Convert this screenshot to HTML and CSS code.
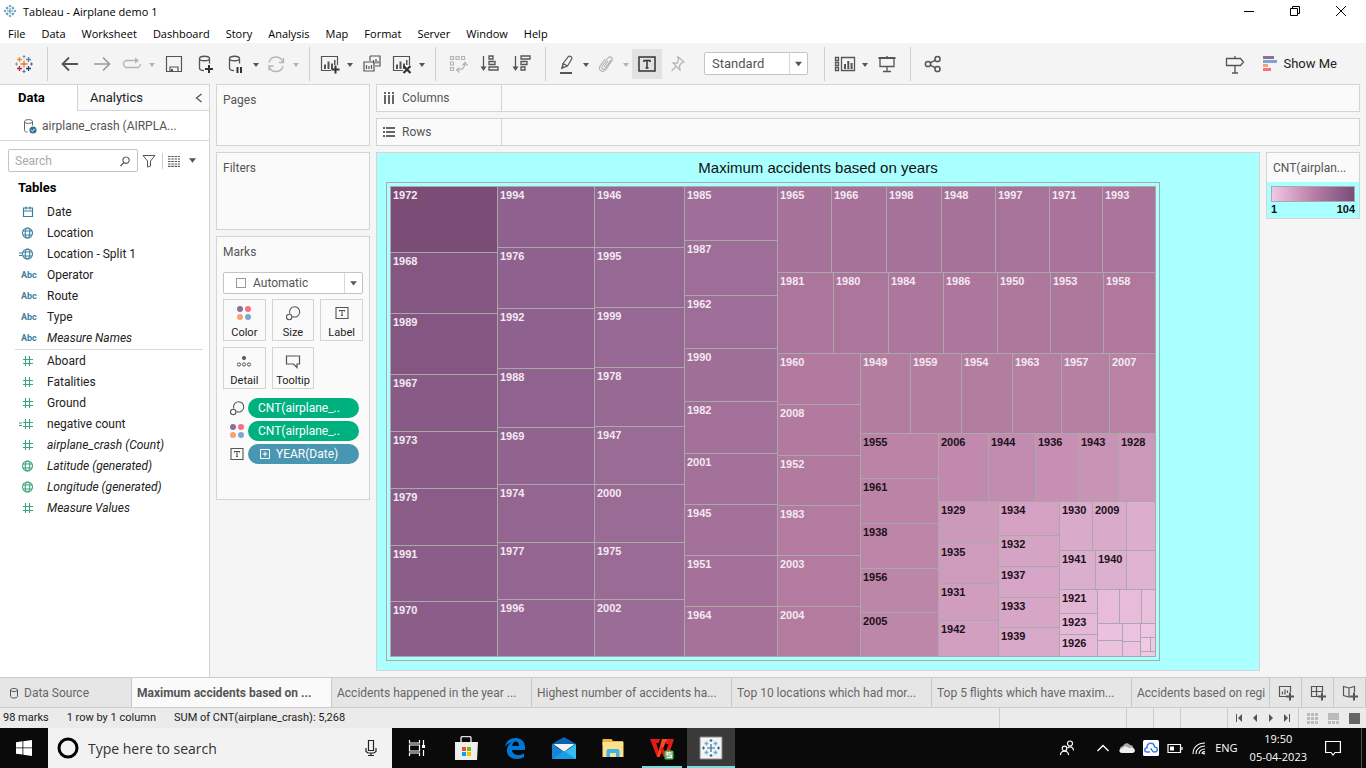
FILE: index.html
```html
<!DOCTYPE html>
<html lang="en">
<head>
<meta charset="utf-8">
<title>Tableau - Airplane demo 1</title>
<link rel="stylesheet" href="styles.css">
</head>
<body>
<svg class="sprite" aria-hidden="true">
  <symbol id="tableau" viewBox="0 0 24 24"><g fill="none" stroke-width="1.300"><path stroke="#e8762d" d="M12 8.500v7M8.500 12h7"/><path stroke="#eb912c" d="M7.500 5v5M5 7.500h5"/><path stroke="#59879b" d="M16.500 5v5M14 7.500h5"/><path stroke="#c72035" d="M7.500 14v5M5 16.500h5"/><path stroke="#1f447e" d="M16.500 14v5M14 16.500h5"/><path stroke="#7199a6" stroke-width="1" d="M12 3v3.500M10.500 4.500h3M4.500 10.500v3M3 12h3"/><path stroke="#5b6591" stroke-width="1" d="M12 17.500V21M10.500 19.500h3M19.500 10.500v3M18 12h3"/></g></symbol>
  <symbol id="tableau-blue" viewBox="0 0 24 24"><g fill="none" stroke="#2e7ba6" stroke-width="1.400"><path d="M12 7v10M7 12h10M7 4.500v5M4.500 7h5M17 4.500v5M14.500 7h5M7 14.500v5M4.500 17h5M17 14.500v5M14.500 17h5M12 1.500v4M10 3.500h4M12 18.500v4M10 20.500h4M3.500 10v4M1.500 12h4M20.500 10v4M18.500 12h4"/></g></symbol>
  <symbol id="caret" viewBox="0 0 8 24"><path fill="currentColor" d="M1 11h6l-3 4z"/></symbol>
  <symbol id="caret-large" viewBox="0 0 8 24"><path fill="currentColor" d="M0 10h8l-4 5z"/></symbol>
  <symbol id="back" viewBox="0 0 24 24"><path fill="none" stroke="currentColor" stroke-width="1.800" d="M20 12H5M11 5.500L4.500 12l6.500 6.500"/></symbol>
  <symbol id="forward" viewBox="0 0 24 24"><path fill="none" stroke="currentColor" stroke-width="1.600" d="M4 12h15M13 5.500l6.500 6.500-6.500 6.500"/></symbol>
  <symbol id="replay" viewBox="0 0 24 24"><path fill="none" stroke="currentColor" stroke-width="1.300" d="M14 8.500H7a3.500 3.500 0 0 0 0 7h10a3.500 3.500 0 0 0 3.500-3.500M14 8.500h4"/><path fill="currentColor" d="M15 5.500l4 3-4 3z"/></symbol>
  <symbol id="save" viewBox="0 0 24 24"><path fill="none" stroke="currentColor" stroke-width="1.200" d="M4.500 4.500h15v15h-15zM8 19v-4h8v4"/><path fill="currentColor" d="M9 17h2v3H9z"/></symbol>
  <symbol id="db" viewBox="0 0 24 24"><path fill="none" stroke="currentColor" stroke-width="1.300" d="M5.500 6.500v9.500c0 1.500 2 2.500 4.500 2.500M15.500 6.500v5M5.500 6.500c0-3 10-3 10 0s-10 3-10 0"/></symbol>
  <symbol id="db-add" viewBox="0 0 24 24"><use href="#db"/><path stroke="#333" stroke-width="2" d="M15 13v8M11 17h8"/></symbol>
  <symbol id="db-pause" viewBox="0 0 24 24"><use href="#db"/><path stroke="#333" stroke-width="2" d="M13.500 15v6M17 15v6"/></symbol>
  <symbol id="refresh" viewBox="0 0 24 24"><path fill="none" stroke="currentColor" stroke-width="1.300" d="M5 10.500a7.200 7.200 0 0 1 14 0M19 14a7.200 7.200 0 0 1-14 0M5 18.500V14h4.500M15 10.500h4.500V6"/></symbol>
  <symbol id="chart" viewBox="0 0 24 24"><path fill="none" stroke="currentColor" stroke-width="1.200" d="M19.500 13V4.500h-16v14H13"/><path fill="currentColor" d="M6 12.500h2V17H6zM9.500 9.500h2V17h-2zM13 11.500h2V17h-2zM16 8h1.500v5H16z"/></symbol>
  <symbol id="chart-add" viewBox="0 0 24 24"><use href="#chart"/><path stroke="#333" stroke-width="2" d="M17.500 13.500v8M13.500 17.500h8"/></symbol>
  <symbol id="chart-clear" viewBox="0 0 24 24"><use href="#chart"/><path stroke="#333" stroke-width="2.200" d="M13.500 14l7 7M20.500 14l-7 7"/></symbol>
  <symbol id="chart-copy" viewBox="0 0 24 24"><path fill="none" stroke="currentColor" stroke-width="1.200" d="M10 4h10v10H15M10 9V4M4 10h10v9H4zM13.500 11.500V8M16 11.500V7M18 11.500V9M6.500 17v-4M9 17v-3M11.500 17v-4"/></symbol>
  <symbol id="swap" viewBox="0 0 24 24"><path fill="none" stroke="currentColor" stroke-width="1.200" d="M4.500 4.500h3v3h-3zM10 4.500h3v3h-3zM15.500 4.500h3v3h-3zM4.500 10h3v3h-3zM4.500 15.500h3v3h-3zM19 11c0 5-3 7-8 7M16.500 13.500l2.500-3 2.500 3M13.500 15.500l-3 2.500 3 2.500"/></symbol>
  <symbol id="sort-up" viewBox="0 0 24 24"><path fill="none" stroke="currentColor" stroke-width="1.300" d="M5.500 4v13M11 4h4v3h-4zM11 9.500h6v3h-6zM11 15h9v3h-9z"/><path fill="currentColor" d="M2.500 14.500h6L5.500 19z"/></symbol>
  <symbol id="sort-down" viewBox="0 0 24 24"><path fill="none" stroke="currentColor" stroke-width="1.300" d="M5.500 4v13M11 4h9v3h-9zM11 9.500h6v3h-6zM11 15h4v3h-4z"/><path fill="currentColor" d="M2.500 14.500h6L5.500 19z"/></symbol>
  <symbol id="pen" viewBox="0 0 24 24"><path fill="none" stroke="currentColor" stroke-width="1.200" d="M9 11.500l5.500-7c1.200-1.200 4 .3 3.300 2.300L13.500 14zM9 11.500l-1 4.500 5.500-2"/><path fill="currentColor" d="M8.300 13.500l2.500 1.700L7 17.500z"/><path stroke="currentColor" stroke-width="2" d="M6 21h12"/></symbol>
  <symbol id="clip" viewBox="0 0 24 24"><path fill="none" stroke="currentColor" stroke-width="1.200" d="M17 8l-6 8.500c-1.500 2-4.500 0-3-2L14 6c2-2.500 5.500 0 3.800 2.600L12 17.500c-3 4-8.500.5-6-3.500L11 7M14 9l-4 6"/></symbol>
  <symbol id="text" viewBox="0 0 24 24"><path fill="none" stroke="currentColor" stroke-width="1.500" d="M4 5h16v14H4zM9 10V8.500h6V10M12 8.500V16M10.500 16h3"/></symbol>
  <symbol id="pin" viewBox="0 0 24 24"><path fill="none" stroke="currentColor" stroke-width="1.200" d="M11.500 4.500l6.500 5.500-2 .5-2.500 3 .5 4.500-7-7 4.500.2L12.500 7zM10 14.500L5.500 19"/></symbol>
  <symbol id="cards" viewBox="0 0 24 24"><path fill="none" stroke="currentColor" stroke-width="1.300" d="M2.500 5.500h3v3h-3zM2.500 10.500h3v3h-3zM2.500 15.500h3v3h-3zM8.500 5.500h13v13h-13z"/><path fill="currentColor" d="M11 12h2v5h-2zM14.300 9h2v8h-2zM17.600 11h2v6h-2z"/></symbol>
  <symbol id="present" viewBox="0 0 24 24"><path fill="none" stroke="currentColor" stroke-width="1.300" d="M5 6v8.500h14V6M12 4v2M12 14.500V19M8 19.500h8"/><path stroke="currentColor" stroke-width="2" d="M3.500 6h17"/></symbol>
  <symbol id="share" viewBox="0 0 24 24"><g fill="none" stroke="currentColor" stroke-width="1.500"><circle cx="7" cy="12" r="2.600"/><circle cx="16.500" cy="7" r="2.600"/><circle cx="16.500" cy="17" r="2.600"/><path d="M9.300 10.800l5-2.600M9.300 13.200l5 2.600"/></g></symbol>
  <symbol id="guide" viewBox="0 0 24 24"><path fill="none" stroke="currentColor" stroke-width="1.300" d="M3.500 6.500h14l3 3.500-3 3.500h-14zM12 4v2.500M12 13.500V21M9 21h6"/></symbol>
  <symbol id="showme" viewBox="0 0 14 16"><path fill="#8a7199" d="M0 0h11v3H0z"/><path fill="#80a5cd" d="M0 4h14v3H0z"/><path fill="#f5a374" d="M0 8h5v3H0z"/><path fill="#f8727d" d="M0 12h8v3H0z"/></symbol>
  <symbol id="source" viewBox="0 0 16 16"><path fill="none" stroke="#666" d="M2.500 3.500v9c0 1 1 1.500 3 1.500M10.500 3.500v4M2.500 3.500c0-2.500 8-2.500 8 0s-8 2.500-8 0"/><circle cx="11" cy="12" r="3.600" fill="#2f7694"/><path fill="none" stroke="#fff" d="M9.200 12l1.300 1.300 2.300-2.600"/></symbol>
  <symbol id="search" viewBox="0 0 12 12"><path fill="none" stroke="#555" stroke-width="1.100" d="M5 7.500L1.500 11M7 2a3.200 3.200 0 1 0 .1 0"/></symbol>
  <symbol id="funnel" viewBox="0 0 14 14"><path fill="none" stroke="#555" d="M1 1.500h12L8.500 7v5l-3 1V7z"/></symbol>
  <symbol id="list" viewBox="0 0 14 12"><path stroke="#555" stroke-width="1.200" stroke-dasharray="2.500 .8" d="M1 1.500h12M1 4h12M1 6.500h12M1 9h12M1 11.300h12"/></symbol>
  <symbol id="date" viewBox="0 0 16 14"><path fill="none" stroke="currentColor" stroke-width="1.200" d="M4.500 3h9v8.500h-9zM4.500 6h9M7 1.500v3M11 1.500v3"/></symbol>
  <symbol id="globe" viewBox="0 0 16 14"><g fill="none" stroke="currentColor" stroke-width="1.100"><circle cx="8.500" cy="7" r="5"/><ellipse cx="8.500" cy="7" rx="2.300" ry="5"/><path d="M4 5h9M4 9h9"/></g></symbol>
  <symbol id="globe-calc" viewBox="0 0 16 14"><use href="#globe"/><path stroke="currentColor" d="M0 6h3M0 8.500h3"/></symbol>
  <symbol id="hash" viewBox="0 0 16 14"><path stroke="currentColor" stroke-width="1.100" d="M6.500 2v10M10.500 2v10M4 5.500h10M4 9.500h10"/></symbol>
  <symbol id="hash-calc" viewBox="0 0 16 14"><use href="#hash"/><path stroke="currentColor" d="M0 6h3M0 8.500h3"/></symbol>
  <symbol id="colors" viewBox="0 0 16 16"><circle cx="4" cy="4" r="3" fill="#8a7199"/><circle cx="12" cy="4" r="3" fill="#f8727d"/><circle cx="4" cy="12" r="3" fill="#f5a374"/><circle cx="12" cy="12" r="3" fill="#80a5cd"/></symbol>
  <symbol id="size" viewBox="0 0 16 16"><g fill="none" stroke="#555" stroke-width="1.100"><path d="M4.800 8.500a5.100 5.100 0 1 1 2.700 3"/><circle cx="4.200" cy="12" r="2.700"/></g></symbol>
  <symbol id="label" viewBox="0 0 16 16"><path fill="none" stroke="#555" stroke-width="1.100" d="M2 2.500h12v11H2zM5.500 6.500v-1h5v1M8 5.500v5M7 10.500h2"/></symbol>
  <symbol id="detail" viewBox="0 0 16 16"><circle cx="8" cy="5" r="2" fill="#555"/><g fill="none" stroke="#555"><circle cx="3" cy="11.500" r="1.600"/><circle cx="8" cy="11.500" r="1.600"/><circle cx="13" cy="11.500" r="1.600"/></g></symbol>
  <symbol id="tooltip" viewBox="0 0 16 16"><path fill="none" stroke="#555" stroke-width="1.200" d="M1.500 3h13v8H12v3.500L8.500 11h-7z"/></symbol>
  <symbol id="plusbox" viewBox="0 0 10 10"><path fill="none" stroke="#fff" d="M.5.500h9v9h-9zM5 2.500v5M2.500 5h5"/></symbol>
  <symbol id="columns" viewBox="0 0 12 12"><path fill="#666" d="M1 0h2v2H1zM5 0h2v2H5zM9 0h2v2H9zM1 3h2v9H1zM5 3h2v9H5zM9 3h2v9H9z"/></symbol>
  <symbol id="rows" viewBox="0 0 12 12"><path fill="#666" d="M0 1h2v2H0zM0 5h2v2H0zM0 9h2v2H0zM3 1h9v2H3zM3 5h9v2H3zM3 9h9v2H3z"/></symbol>
  <symbol id="cylinder" viewBox="0 0 10 12"><path fill="none" stroke="#555" d="M1.500 3v6.500c0 2 7 2 7 0V3c0-2-7-2-7 0s7 2 7 0"/></symbol>
  <symbol id="new-sheet" viewBox="0 0 18 16"><path fill="none" stroke="#555" stroke-width="1.200" d="M13.500 7V1.500h-11v10H9M5.500 9.500v-3M8 9.500v-5M10.500 8V5.500"/><path stroke="#555" stroke-width="2" d="M13 7.500v8M9 11.500h8"/></symbol>
  <symbol id="new-dash" viewBox="0 0 18 16"><path fill="none" stroke="#555" stroke-width="1.200" d="M13.500 7V1.500h-11v10H9M2.500 6.500h11M7.500 1.500v10"/><path stroke="#555" stroke-width="2" d="M13 7.500v8M9 11.500h8"/></symbol>
  <symbol id="new-story" viewBox="0 0 18 16"><path fill="none" stroke="#555" stroke-width="1.200" d="M13.500 7V1.500L8 3 2.500 1.500v9L8 12V3"/><path stroke="#555" stroke-width="2" d="M13 7.500v8M9 11.500h8"/></symbol>
  <symbol id="nav-first" viewBox="0 0 8 8"><path fill="#555" d="M1 0h1v8H1zM7 0v8L3 4z"/></symbol>
  <symbol id="nav-prev" viewBox="0 0 8 8"><path fill="#555" d="M6 0v8L2 4z"/></symbol>
  <symbol id="nav-next" viewBox="0 0 8 8"><path fill="#555" d="M2 0v8l4-4z"/></symbol>
  <symbol id="nav-last" viewBox="0 0 8 8"><path fill="#555" d="M6 0h1v8H6zM1 0v8l4-4z"/></symbol>
  <symbol id="view-grid" viewBox="0 0 11 11"><path fill="#bbb" d="M0 0h3v3H0zM4 0h3v3H4zM8 0h3v3H8zM0 4h3v3H0zM4 4h3v3H4zM8 4h3v3H8zM0 8h3v3H0zM4 8h3v3H4zM8 8h3v3H8z"/></symbol>
  <symbol id="view-film" viewBox="0 0 11 11"><path fill="#bbb" d="M0 0h11v7H0zM0 8h3v3H0zM4 8h3v3H4zM8 8h3v3H8z"/></symbol>
  <symbol id="view-one" viewBox="0 0 11 11"><path fill="#666" d="M0 0h11v11H0z"/></symbol>
</svg>

<div class="app">
  <header class="titlebar">
    <svg class="app-icon"><use href="#tableau-blue"/></svg>
    <h1>Tableau - Airplane demo 1</h1>
    <div class="window-buttons">
      <button aria-label="Minimize"><svg viewBox="0 0 12 12"><path stroke="#000" d="M1 6.500h10"/></svg></button>
      <button aria-label="Restore"><svg viewBox="0 0 12 12"><path fill="none" stroke="#000" d="M1.500 3.500h7v7h-7zM3.500 3.500v-2h7v7h-2"/></svg></button>
      <button aria-label="Close"><svg viewBox="0 0 12 12"><path stroke="#000" d="M1 1l10 10M11 1L1 11"/></svg></button>
    </div>
  </header>
  <nav class="menubar">
    <button>File</button><button>Data</button><button>Worksheet</button><button>Dashboard</button><button>Story</button><button>Analysis</button><button>Map</button><button>Format</button><button>Server</button><button>Window</button><button>Help</button>
  </nav>

  <div class="toolbar">
    <div class="group first"><button class="tool" aria-label="Start page"><svg><use href="#tableau"/></svg></button></div>
    <div class="group">
      <button class="tool" aria-label="Undo"><svg><use href="#back"/></svg></button>
      <button class="tool soft" aria-label="Redo"><svg><use href="#forward"/></svg></button>
      <button class="tool split off" aria-label="Replay"><svg><use href="#replay"/></svg><svg class="caret"><use href="#caret"/></svg></button>
      <button class="tool" aria-label="Save"><svg><use href="#save"/></svg></button>
      <button class="tool" aria-label="New data source"><svg><use href="#db-add"/></svg></button>
      <button class="tool split" aria-label="Pause updates"><svg><use href="#db-pause"/></svg><svg class="caret"><use href="#caret"/></svg></button>
      <button class="tool split off" aria-label="Run update"><svg><use href="#refresh"/></svg><svg class="caret"><use href="#caret"/></svg></button>
    </div>
    <div class="group">
      <button class="tool split" aria-label="New worksheet"><svg><use href="#chart-add"/></svg><svg class="caret"><use href="#caret"/></svg></button>
      <button class="tool" aria-label="Duplicate"><svg><use href="#chart-copy"/></svg></button>
      <button class="tool split" aria-label="Clear sheet"><svg><use href="#chart-clear"/></svg><svg class="caret"><use href="#caret"/></svg></button>
    </div>
    <div class="group">
      <button class="tool off" aria-label="Swap"><svg><use href="#swap"/></svg></button>
      <button class="tool" aria-label="Sort ascending"><svg><use href="#sort-up"/></svg></button>
      <button class="tool" aria-label="Sort descending"><svg><use href="#sort-down"/></svg></button>
    </div>
    <div class="group wide">
      <button class="tool split" aria-label="Highlight"><svg><use href="#pen"/></svg><svg class="caret"><use href="#caret"/></svg></button>
      <button class="tool split off" aria-label="Group members"><svg><use href="#clip"/></svg><svg class="caret"><use href="#caret"/></svg></button>
      <button class="tool pressed" aria-label="Show mark labels"><svg><use href="#text"/></svg></button>
      <button class="tool off" aria-label="Fix axes"><svg><use href="#pin"/></svg></button>
      <div class="select fit"><select aria-label="Fit"><option>Standard</option><option>Fit Width</option><option>Entire View</option></select><svg class="caret"><use href="#caret-large"/></svg></div>
    </div>
    <div class="group">
      <button class="tool split" aria-label="Show cards"><svg><use href="#cards"/></svg><svg class="caret"><use href="#caret"/></svg></button>
      <button class="tool" aria-label="Presentation mode"><svg><use href="#present"/></svg></button>
    </div>
    <div class="group last"><button class="tool" aria-label="Share"><svg><use href="#share"/></svg></button></div>
    <button class="tool" aria-label="Guide"><svg><use href="#guide"/></svg></button>
    <button class="showme"><svg><use href="#showme"/></svg>Show Me</button>
  </div>

  <div class="workspace">
    <aside class="data-pane">
      <div class="pane-tabs"><button class="active">Data</button><button class="analytics">Analytics<svg viewBox="0 0 8 12"><path fill="none" stroke="#555" stroke-width="1.300" d="M6.500 2l-5 4 5 4"/></svg></button></div>
      <button class="datasource"><svg><use href="#source"/></svg>airplane_crash (AIRPLA...</button>
      <div class="search-row">
        <label class="search"><input type="text" placeholder="Search" aria-label="Search fields"><svg><use href="#search"/></svg></label>
        <button class="filter" aria-label="Filter fields"><svg><use href="#funnel"/></svg></button>
        <button class="view" aria-label="View options"><svg><use href="#list"/></svg><svg viewBox="0 0 8 5"><path fill="#555" d="M0 0h8L4 5z"/></svg></button>
      </div>
      <h2>Tables</h2>
      <ul class="fields dims">
        <li><svg><use href="#date"/></svg>Date</li>
        <li><svg><use href="#globe"/></svg>Location</li>
        <li><svg><use href="#globe-calc"/></svg>Location - Split 1</li>
        <li><b>Abc</b>Operator</li>
        <li><b>Abc</b>Route</li>
        <li><b>Abc</b>Type</li>
        <li><b>Abc</b><i>Measure Names</i></li>
      </ul>
      <ul class="fields measures">
        <li><svg><use href="#hash"/></svg>Aboard</li>
        <li><svg><use href="#hash"/></svg>Fatalities</li>
        <li><svg><use href="#hash"/></svg>Ground</li>
        <li><svg><use href="#hash-calc"/></svg>negative count</li>
        <li><svg><use href="#hash"/></svg><i>airplane_crash (Count)</i></li>
        <li><svg><use href="#globe"/></svg><i>Latitude (generated)</i></li>
        <li><svg><use href="#globe"/></svg><i>Longitude (generated)</i></li>
        <li><svg><use href="#hash"/></svg><i>Measure Values</i></li>
      </ul>
    </aside>

    <div class="cards">
      <section class="card pages"><h3>Pages</h3></section>
      <section class="card filters"><h3>Filters</h3></section>
      <section class="card marks">
        <h3>Marks</h3>
        <div class="select mark-type"><span class="square"></span><select aria-label="Mark type"><option>Automatic</option><option>Square</option><option>Bar</option></select><svg class="caret"><use href="#caret-large"/></svg></div>
        <div class="mark-buttons">
          <button><svg><use href="#colors"/></svg>Color</button>
          <button><svg><use href="#size"/></svg>Size</button>
          <button><svg><use href="#label"/></svg>Label</button>
          <button><svg><use href="#detail"/></svg>Detail</button>
          <button><svg><use href="#tooltip"/></svg>Tooltip</button>
        </div>
        <ul class="pills">
          <li><svg><use href="#size"/></svg><button class="pill">CNT(airplane_..</button></li>
          <li><svg><use href="#colors"/></svg><button class="pill">CNT(airplane_..</button></li>
          <li><svg><use href="#label"/></svg><button class="pill blue"><svg><use href="#plusbox"/></svg>YEAR(Date)</button></li>
        </ul>
      </section>
    </div>

    <main class="sheet">
      <div class="shelf"><span><svg><use href="#columns"/></svg>Columns</span></div>
      <div class="shelf"><span><svg><use href="#rows"/></svg>Rows</span></div>
      <div class="view-row">
        <section class="view-area">
          <h2>Maximum accidents based on years</h2>
          <div class="frame"><div class="treemap row" id="treemap"></div></div>
        </section>
        <section class="legend">
          <h3>CNT(airplan...</h3>
          <div class="ramp"><div class="bar"></div><p><span>1</span><span>104</span></p></div>
        </section>
      </div>
    </main>
  </div>

  <div class="sheet-tabs">
    <button class="source-tab"><svg><use href="#cylinder"/></svg>Data Source</button>
    <div class="tab-strip">
      <button class="active">Maximum accidents based on ...</button>
      <button>Accidents happened in the year ...</button>
      <button>Highest number of accidents ha...</button>
      <button>Top 10 locations which had mor...</button>
      <button>Top 5 flights which have maxim...</button>
      <button class="partial">Accidents based on regi</button>
    </div>
    <button class="new" aria-label="New worksheet"><svg><use href="#new-sheet"/></svg></button>
    <button class="new" aria-label="New dashboard"><svg><use href="#new-dash"/></svg></button>
    <button class="new" aria-label="New story"><svg><use href="#new-story"/></svg></button>
  </div>

  <div class="status">
    <span>98 marks</span><span>1 row by 1 column</span><span>SUM of CNT(airplane_crash): 5,268</span>
    <div class="slot large"></div><div class="slot"></div><div class="slot"></div><div class="slot medium"></div>
    <div class="nav"><button aria-label="First"><svg><use href="#nav-first"/></svg></button><button aria-label="Previous"><svg><use href="#nav-prev"/></svg></button><button aria-label="Next"><svg><use href="#nav-next"/></svg></button><button aria-label="Last"><svg><use href="#nav-last"/></svg></button></div>
    <div class="views"><button aria-label="Sheet sorter"><svg><use href="#view-grid"/></svg></button><button aria-label="Filmstrip"><svg><use href="#view-film"/></svg></button><button aria-label="Tabs"><svg><use href="#view-one"/></svg></button></div>
  </div>

  <footer class="taskbar">
    <button class="start" aria-label="Start"><svg viewBox="0 0 16 16"><path fill="#fff" d="M0 2.200L6.500 1.300v6.200H0zM7.300 1.200L16 0v7.500H7.300zM0 8.300h6.500v6.200L0 13.700zM7.300 8.300H16V16l-8.700-1.200z"/></svg></button>
    <label class="task-search">
      <svg viewBox="0 0 22 22"><circle cx="11" cy="11" r="9" fill="none" stroke="#000" stroke-width="3"/></svg>
      <input type="text" placeholder="Type here to search" aria-label="Type here to search">
      <svg class="mic" viewBox="0 0 12 18"><path fill="none" stroke="#222" stroke-width="1.200" d="M3.500 1.500h5v10h-5zM1 9v3.500L3 14h6l2-1.500V9M6 14v3M3 16.500h6"/></svg>
    </label>
    <button class="task" aria-label="Task view"><svg viewBox="0 0 24 24"><path fill="none" stroke="#fff" stroke-width="1.200" d="M4.500 4v3h10V4M4.500 20v-3h10v3M4.500 9h10v6h-10zM18.500 4v5M18.500 14v6"/><path fill="#fff" d="M17 9h3v3h-3z"/></svg></button>
    <button class="task" aria-label="Store"><svg viewBox="0 0 24 24"><path fill="none" stroke="#ddd" stroke-width="1.400" d="M7 7V2q0-1.500 1.500-1.500h7Q17 .500 17 2v5"/><path fill="#eee" d="M1 6h23l-1 18H1z"/><path fill="#f25022" d="M8 11h4v4H8z"/><path fill="#7fba00" d="M13 11h4v4h-4z"/><path fill="#00a4ef" d="M8 16h4v4H8z"/><path fill="#ffb900" d="M13 16h4v4h-4z"/></svg></button>
    <button class="task" aria-label="Edge"><svg viewBox="0 0 24 24"><path fill="#0078d7" d="M2 11C3 5 7 2 12.500 2 18.500 2 22 6 22 11.500V14H9c.3 3.500 3 5 6.500 5 2.300 0 4-.6 5.500-1.500V21c-2 1.300-4 2-7 2-7 0-10.500-4-10-9.500C4.300 10 6 8 9 6.500 5.500 7 3.500 8.500 2 11zm7.200-1H16c0-3-1.200-4.500-3.200-4.500S9.500 7 9.200 10z"/></svg></button>
    <button class="task" aria-label="Mail"><svg viewBox="0 0 24 24"><path fill="#0a64b4" d="M0 8l12-7 12 7v3H0z"/><path fill="#f4f4f4" d="M1.500 8h21L12 16z"/><path fill="#1784d8" d="M0 8l12 8-12 7z"/><path fill="#35bdf4" d="M24 8v15H0l12-7z"/><path fill="#1a9be5" d="M12 15l12 8H0z"/></svg></button>
    <button class="task" aria-label="File Explorer"><svg viewBox="0 0 24 24"><path fill="#e9b93e" d="M1.500 3h9l1.500 2h10v4h-20.500z"/><path fill="#fde08c" d="M1.500 6h21v15h-21z"/><path fill="#3fb3e6" d="M5.500 21v-6q0-2 2-2h9q2 0 2 2v6H15v-4H9v4z"/></svg></button>
    <button class="task running" aria-label="WPS Office"><svg viewBox="0 0 24 24"><path fill="#e61b16" d="M0 3h5l4 13-2 5zM15 3h9l-6 18h-4l4.500-13H16z"/><path fill="#ff4a20" d="M12 3h5L9.500 21H7z"/><path fill="#e61b16" d="M4 3h6l-1.500 4H5zM12 10l4 8-2 3-4-7z"/><rect x="14.500" y="14.500" width="9" height="9" rx="1.500" fill="#5cb85c"/><path fill="none" stroke="#fff" stroke-width="1.200" d="M21.500 16.800h-4.500v2.200h4.500v2.300H17"/></svg></button>
    <button class="task current" aria-label="Tableau"><svg viewBox="0 0 24 24"><path fill="#f4f4f4" stroke="#888" d="M1 1h22v22H1z"/><path stroke="#2672a0" stroke-width="1.200" d="M12 8v8M8 12h8M12 3v3M10.500 4.500h3M12 18v3M10.500 19.500h3M4.500 10.500v3M3 12h3M19.500 10.500v3M18 12h3"/><path stroke="#6fb0d0" stroke-width="1.500" d="M7.500 5.500v4M5.500 7.500h4M16.500 5.500v4M14.500 7.500h4M7.500 14.500v4M5.500 16.500h4M16.500 14.500v4M14.500 16.500h4"/></svg></button>
    <div class="tray">
      <button class="people" aria-label="People"><svg viewBox="0 0 16 16"><g fill="none" stroke="#fff" stroke-width="1.200"><circle cx="5.500" cy="8.500" r="2.300"/><circle cx="11" cy="3.500" r="2.500"/><path d="M1.500 15c0-5 8-5 8 0M8.500 8c2.500-2 6-1 6 2.500"/></g></svg></button>
      <button aria-label="Show hidden icons"><svg viewBox="0 0 16 16"><path fill="none" stroke="#fff" stroke-width="1.400" d="M2.500 11L8 5.500l5.500 5.500"/></svg></button>
      <button aria-label="OneDrive"><svg viewBox="0 0 16 16"><path fill="#aaa" d="M1 9c0-2 1.500-3 3-3C5 3 9 2 11 5c2 0 3 1 3.500 2.500L8 9z"/><path fill="#eee" d="M3 13c-4 0-3-5 0-4.500C5 5.500 8 6 10 8c4-2 7 1.500 5.500 4L14 13z"/></svg></button>
      <button aria-label="Cloud sync"><svg viewBox="0 0 16 16"><rect width="16" height="16" rx="1.500" fill="#fff"/><path fill="none" stroke="#3b7ef0" stroke-width="1.500" d="M7 12H4c-3 0-3-4 0-4.300C4 2 11 2 11.500 7c4 0 3.500 5 0 5-3 0-2-2.500-4-3.500"/></svg></button>
      <button aria-label="Battery"><svg viewBox="0 0 16 16"><path fill="none" stroke="#fff" stroke-width="1.200" d="M1 4.500h12.500v8H1zM15 7v3"/><path fill="#fff" d="M3 6.500h4v4H3z"/></svg></button>
      <button aria-label="Network"><svg viewBox="0 0 16 16"><g fill="none" stroke="#fff" stroke-width="1.100"><path d="M2 14C2 7 7 3 14 3M5 14c0-5 4-8 9-8M8 14c0-3 2.500-5 6-5M11 14c0-1.500 1-2.500 3-2.500"/></g><circle cx="13" cy="13.500" r="1" fill="#fff"/></svg></button>
      <span class="lang">ENG</span>
      <time>19:50<br>05-04-2023</time>
      <button class="notify" aria-label="Notifications"><svg viewBox="0 0 16 16"><path fill="none" stroke="#fff" stroke-width="1.200" d="M.6 1.500h14.800v11H10L8 15l-2-2.500H.6z"/></svg></button>
    </div>
  </footer>
</div>
<script src="treemap.js"></script>
</body>
</html>
```
FILE: styles.css
```css
* { box-sizing: border-box; }
body { margin: 0; font: 12px/16px "Open Sans", "Noto Sans", sans-serif; color: #222; }
h1, h2, h3, p, ul { margin: 0; padding: 0; font-weight: 400; font-size: inherit; }
ul { list-style: none; }
button, input, select { font: inherit; color: inherit; border: 0; padding: 0; margin: 0; background: none; border-radius: 0; outline: 0; }
svg { display: block; flex: none; }
.sprite { width: 0; height: 0; position: absolute; }

.app { display: flex; flex-direction: column; height: 100vh; background: #f5f5f5; }

.titlebar { display: flex; align-items: center; height: 22px; flex: none; background: #fff; padding: 0 2px 0 3px; color: #000; gap: 6px; font-size: 11px; }
.app-icon { width: 14px; height: 14px; }
.titlebar h1 { flex: 1; padding-top: 2px; }
.window-buttons { display: flex; }
.window-buttons button { width: 46px; height: 22px; display: grid; place-items: center; }
.window-buttons svg { width: 12px; height: 12px; }
.menubar { display: flex; height: 21px; flex: none; background: #fff; color: #000; padding: 2px 8px 0; gap: 16px; font-size: 11px; }

.toolbar { display: flex; align-items: center; height: 41px; flex: none; background: #f4f4f4; color: #555; padding-right: 29px; }
.group { display: flex; align-items: center; height: 34px; gap: 8px; padding: 0 11px 0 10px; border-right: 1px solid #cfcfcf; }
.group.first { padding-left: 12px; }
.group.wide { padding-right: 16px; }
.group.last { border: 0; margin-right: auto; }
.tool { display: flex; gap: 4px; flex: none; }
.tool svg { width: 24px; height: 24px; }
.tool svg.caret { width: 8px; }
.split { margin: 0 -2px; }
.soft { color: #999; }
.off { color: #b4b4b4; }
.pressed { background: #e2e2e2; color: #333; padding: 3px; margin: 0 -4px; }
.select { position: relative; background: #fff; border: 1px solid #c4c4c4; border-radius: 2px; color: #555; display: flex; }
.select select { appearance: none; flex: 1; min-width: 0; }
.select .caret { position: absolute; right: 0; top: 0; width: 18px; height: 100%; border-left: 1px solid #d8d8d8; pointer-events: none; }
.fit { width: 104px; height: 23px; margin-left: 6px; font: 13px/16px Roboto, sans-serif; }
.fit select { padding-left: 7px; }
.showme { display: flex; align-items: center; gap: 6px; margin-left: 16px; font: 13px/20px Roboto, sans-serif; color: #222; }
.showme svg { width: 14px; height: 16px; }

.workspace { display: flex; flex: 1; min-height: 0; font-family: Roboto, sans-serif; }
.data-pane { width: 210px; flex: none; background: #fff; border-right: 1px solid #d4d4d4; border-top: 1px solid #d4d4d4; color: #222; }
.pane-tabs { display: flex; height: 26px; font-size: 13px; }
.pane-tabs button { flex: 1; text-align: left; }
.pane-tabs .active { flex: 0 0 77px; padding-left: 18px; font-weight: 700; color: #000; }
.pane-tabs .analytics { display: flex; align-items: center; justify-content: space-between; padding: 0 6px 0 12px; background: #fafafa; border: solid #d4d4d4; border-width: 0 0 1px 1px; }
.pane-tabs svg { width: 8px; height: 12px; }
.datasource { display: flex; align-items: center; gap: 4px; width: 100%; height: 30px; padding-left: 22px; color: #555; border-bottom: 1px solid #d8d8d8; }
.datasource svg { width: 16px; height: 16px; }
.search-row { display: flex; align-items: center; padding: 8px 8px 0; }
.search { display: flex; align-items: center; width: 130px; height: 23px; border: 1px solid #c4c4c4; border-radius: 2px; padding: 0 6px; }
.search input { flex: 1; min-width: 0; }
.search input::placeholder { color: #aaa; opacity: 1; }
.search svg { width: 12px; height: 12px; }
.filter { padding: 0 6px 0 4px; border-right: 1px solid #ccc; }
.filter svg { width: 14px; height: 16px; }
.view { display: flex; align-items: center; gap: 8px; padding-left: 4px; }
.view svg { width: 14px; height: 12px; }
.view svg + svg { width: 7px; height: 5px; }
.data-pane h2 { padding: 8px 18px 5px; font-size: 13px; font-weight: 700; color: #000; }
.fields { margin: 0 6px 0 15px; }
.fields li { display: flex; align-items: center; height: 21px; padding-left: 4px; }
.fields svg { width: 16px; height: 14px; margin: 0 12px 0 0; }
.dims svg, .dims b { color: #3b7f9d; }
.dims b { width: 26px; margin-left: 2px; font-size: 9px; }
.measures { color: #222; border-top: 1px solid #d8d8d8; margin-top: 1px; }
.measures svg { color: #3ba57b; }

.cards { width: 154px; flex: none; margin-left: 6px; display: flex; flex-direction: column; gap: 6px; }
.card { background: #fafafa; border: 1px solid #d4d4d4; padding: 7px 6px; color: #555; }
.pages { height: 62px; }
.filters { height: 78px; }
.marks { height: 264px; }
.mark-type { width: 140px; height: 22px; margin: 12px 0 5px; align-items: center; }
.square { width: 10px; height: 10px; border: 1px solid #999; margin: 0 7px 0 12px; }
.mark-buttons { display: grid; grid-template-columns: repeat(3, 1fr); gap: 6px; }
.mark-buttons button { display: flex; flex-direction: column; align-items: center; gap: 4px; height: 42px; padding-top: 5px; border: 1px solid #d4d4d4; font-size: 11px; color: #222; }
.mark-buttons svg, .pills svg { width: 16px; height: 16px; }
.pills { display: grid; gap: 3px; margin: 9px 4px 0 6px; }
.pills li { display: flex; align-items: center; gap: 3px; }
.pill { display: flex; align-items: center; gap: 6px; flex: 1; height: 20px; border-radius: 10px; padding-left: 10px; background: #00b180; color: #fff; white-space: nowrap; }
.pill.blue { background: #4996b2; padding-left: 12px; }
.pill svg { width: 10px; height: 10px; }

.sheet { flex: 1; min-width: 0; display: flex; flex-direction: column; gap: 6px; padding: 0 6px 6px; }
.shelf { height: 28px; flex: none; background: #fafafa; border: 1px solid #d4d4d4; display: flex; color: #555; }
.shelf span { display: flex; align-items: center; gap: 7px; width: 125px; padding-left: 6px; border-right: 1px solid #d4d4d4; }
.shelf svg { width: 12px; height: 12px; }
.view-row { flex: 1; min-height: 0; display: flex; align-items: flex-start; gap: 6px; }
.view-area { flex: 1; align-self: stretch; min-width: 0; display: flex; flex-direction: column; background: #aff; border: 1px solid #d4d4d4; padding: 5px 99px 9px 9px; }
.view-area h2 { font: 15px/20px "Liberation Sans", Arial, sans-serif; color: #111; text-align: center; margin: 0 -99px 4px -9px; }
.frame { flex: 1; min-height: 0; border: 1px solid #aaa; padding: 3px; display: flex; }
.treemap { border: solid #aaa; border-width: 1px 0 0 1px; }
.treemap, .treemap div { display: flex; flex-basis: 0; flex-grow: 1; min-width: 0; min-height: 0; overflow: hidden; }
.treemap .col { flex-direction: column; }
.treemap .cell { display: block; box-shadow: inset -1px -1px #a9a9a9; font: bold 11px/13px "Liberation Sans", Arial, sans-serif; color: #f3e9f1; }
.treemap .dark { color: #1d1119; }
.cell span { display: block; padding: 2px 0 0 2px; }
.legend { width: 94px; flex: none; border: 1px solid #d4d4d4; background: #fafafa; color: #555; }
.legend h3 { padding: 7px 6px 6px; }
.ramp { background: #aff; padding: 4px 4px 2px; }
.bar { height: 16px; border: 1px solid #aaa; background: linear-gradient(90deg, #eec9e5, #bb7fa6 50%, #966694 75%, #7b4c76); }
.ramp p { display: flex; justify-content: space-between; font: bold 11px/13px "Liberation Sans", Arial, sans-serif; color: #111; padding-top: 1px; }

.sheet-tabs { display: flex; height: 31px; flex: none; border: solid #ccc; border-width: 1px 0; background: #e6e6e6; color: #666; font: 12px/16px Roboto, sans-serif; }
.sheet-tabs button { border-right: 1px solid #c8c8c8; flex: none; }
.source-tab { display: flex; align-items: center; gap: 5px; width: 132px; padding-left: 9px; }
.source-tab svg { width: 10px; height: 12px; }
.tab-strip { display: flex; flex: 1; min-width: 0; overflow: hidden; border-right: 1px solid #c8c8c8; }
.tab-strip button { width: 200px; text-align: left; padding-left: 5px; white-space: nowrap; }
.tab-strip .partial { width: auto; border: 0; }
.tab-strip .active { background: #fafafa; font-weight: 700; color: #555; }
.sheet-tabs .new { width: 32px; display: grid; place-items: center; }
.new svg { width: 18px; height: 16px; }

.status { display: flex; align-items: center; height: 20px; flex: none; background: #ebebeb; font: 11px/16px Roboto, sans-serif; padding-left: 3px; }
.status span { margin-right: 18px; }
.slot, .nav, .views { height: 100%; border-left: 1px solid #ccc; width: 27px; }
.slot.large { width: 127px; margin-left: auto; }
.slot.medium { width: 47px; }
.nav { display: flex; align-items: center; width: 71px; padding-left: 7px; gap: 8px; }
.nav svg { width: 8px; height: 8px; }
.views { display: flex; align-items: center; width: 68px; padding-left: 8px; gap: 10px; }
.views svg { width: 11px; height: 11px; }

.taskbar { display: flex; height: 40px; flex: none; background: #0a0a0a; color: #fff; }
.start { width: 48px; display: grid; place-items: center; }
.start svg { width: 16px; height: 16px; }
.task-search { display: flex; align-items: center; gap: 9px; width: 344px; background: #f2f2f2; color: #333; padding: 0 15px 0 9px; font-size: 14px; }
.task-search input { flex: 1; min-width: 0; height: 30px; }
.task-search input::placeholder { color: #333; opacity: 1; }
.task-search svg { width: 22px; height: 22px; }
.task-search .mic { width: 12px; height: 18px; }
.task { width: 49px; display: grid; place-items: center; border-bottom: 2px solid transparent; border-top: 2px solid transparent; }
.task svg { width: 24px; height: 24px; }
.running { width: 40px; margin: 0 5px; border-bottom-color: #76dce0; }
.current { width: 48px; background: #3a3a3a; border-top-color: #3a3a3a; border-bottom-color: #76dce0; }
.tray { display: flex; align-items: center; gap: 8px; margin-left: auto; border-right: 1px solid #555; padding-right: 20px; margin-right: 4px; font-size: 11px; }
.tray svg { width: 16px; height: 16px; }
.tray .people { margin-right: 12px; }
.tray time { text-align: center; line-height: 18px; margin: 0 10px 0 4px; }
```
FILE: treemap.js
```javascript
// Nested layout of the treemap. A leaf is [size, colour, year]; a group is
// [size, direction, children]. Sizes are relative to the siblings.
const stack = (sizes, colours, years) =>
  sizes.map((size, i) => [size, colours[Math.min(i, colours.length - 1)], years ? years.split(" ")[i] : ""]);

const tree = [
  [107, "col", stack([66, 61, 61, 57, 57, 57, 56, 55], ["#7b4c76", "#845682", "#845682", "#885b86", "#895c87", "#8a5d88", "#8b5e89", "#8b5e8a"], "1972 1968 1989 1967 1973 1979 1991 1970")],
  [97, "col", stack([61, 61, 60, 59, 57, 58, 57, 57], ["#8f618e", "#8f618e", "#8f618e", "#90628f", "#91638f", "#936590", "#936590", "#946691"], "1994 1976 1992 1988 1969 1974 1977 1996")],
  [90, "col", stack([61, 60, 60, 59, 58, 58, 57, 57], ["#956793", "#966893", "#976893", "#986993", "#9a6b95", "#9a6b95", "#9a6b95", "#9b6c96"], "1946 1995 1999 1978 1947 2000 1975 2002")],
  [93, "col", stack([54, 55, 53, 53, 52, 51, 51, 51, 50], ["#9e6d98", "#9e6d98", "#9f6e98", "#a06f98", "#a37099", "#a37099", "#a4719a", "#a5719a", "#a6729a"], "1985 1987 1962 1990 1982 2001 1945 1951 1964")],
  [378, "col", [
    [86, "row", stack([54, 55, 55, 54, 54, 53, 53], ["#a6729a", "#a6729a", "#a7729a", "#a7729a", "#a8739a", "#a9739b", "#aa749b"], "1965 1966 1998 1948 1997 1971 1993")],
    [81, "row", stack([56, 55, 55, 54, 53, 53, 52], ["#ac759b", "#ac759b", "#ad769c", "#ad769c", "#ae779c", "#ae779c", "#af789c"], "1981 1980 1984 1986 1950 1953 1958")],
    [303, "row", [
      [83, "col", stack([51, 51, 50, 50, 51, 50], ["#b17a9e", "#b17a9e", "#b17a9e", "#b27b9f", "#b27b9f", "#b37c9f"], "1960 2008 1952 1983 2003 2004")],
      [295, "col", [
        [80, "row", stack([50, 51, 51, 49, 48, 46], ["#b37da0", "#b37da0", "#b37da0", "#b57fa2", "#b680a3", "#b982a5"], "1949 1959 1954 1963 1957 2007")],
        [223, "row", [
          [78, "col", stack([45, 45, 45, 44, 44], ["#bb84a7", "#bb84a7", "#bc85a8", "#bc86a9", "#bd87aa"], "1955 1961 1938 1956 2005")],
          [217, "col", [
            [68, "row", stack([50, 47, 43, 40, 37], ["#c089ad", "#c28cb0", "#c68fb3", "#c993b6", "#cc98b9"], "2006 1944 1936 1943 1928")],
            [155, "row", [
              [60, "col", stack([42, 40, 37, 36], ["#cd99bb", "#cf9bbd", "#d19dbe", "#d29fc0"], "1929 1935 1931 1942")],
              [61, "col", stack([34, 31, 31, 30, 29], ["#d4a1c3", "#d5a3c4", "#d6a4c6", "#d7a6c7", "#d8a8c8"], "1934 1932 1937 1933 1939")],
              [96, "col", [
                [49, "row", stack([33, 34, 29], ["#daaacb", "#daaacb", "#dcadcd"], "1930 2009 ")],
                [39, "row", stack([36, 31, 29], ["#dcaecd", "#deb0cf", "#e0b3d2"], "1941 1940 ")],
                [67, "row", [
                  [38, "col", stack([24, 21, 22], ["#e2b5d3", "#e4b8d6", "#e5b9d7"], "1921 1923 1926")],
                  [58, "col", [
                    [34, "row", stack([22, 22, 14], ["#e7bbd9", "#e7bbd9", "#eabfdc"])],
                    [33, "row", [
                      [25, "col", stack([17, 16], ["#ebc2de"])],
                      [18, "col", stack([18, 15], ["#ebc3e0"])],
                      [15, "col", [
                        [14, "#eec6e3", ""],
                        [14, "row", stack([10, 5], ["#efc9e5"])],
                        [5, "#efc9e5", ""]
                      ]]
                    ]]
                  ]]
                ]]
              ]]
            ]]
          ]]
        ]]
      ]]
    ]]
  ]]
];

// Red channel decides whether the label is light or dark.
const needsDarkLabel = colour => parseInt(colour.slice(1, 3), 16) >= 0xbb;

function build(parent, nodes) {
  for (const [size, kind, content] of nodes) {
    const el = document.createElement("div");
    el.style.flexGrow = size;
    if (Array.isArray(content)) {
      el.className = kind;
      build(el, content);
    } else {
      el.className = needsDarkLabel(kind) ? "cell dark" : "cell";
      el.style.background = kind;
      if (content) {
        const label = document.createElement("span");
        label.textContent = content;
        el.append(label);
      }
    }
    parent.append(el);
  }
}

build(document.getElementById("treemap"), tree);
```
